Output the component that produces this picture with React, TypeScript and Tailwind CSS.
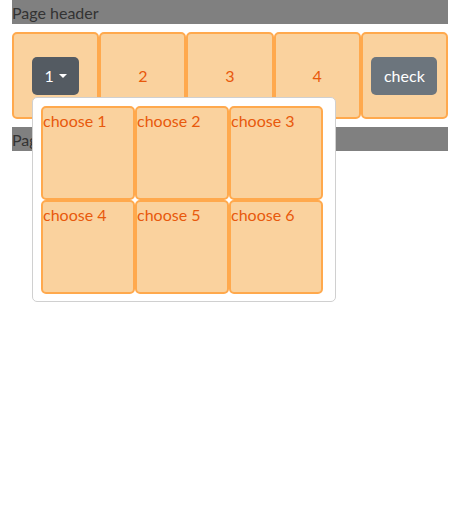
import React from "react";

const cell = "border-2 border-[#ffa94d] bg-[#fad29e] rounded-[5px] flex items-center justify-center text-[#e8590c]";

export default function App() {
  const choices = ["choose 1", "choose 2", "choose 3", "choose 4", "choose 5", "choose 6"];
  return (
    <div className="min-h-[524px] bg-white text-[16px] leading-6 text-[#212529]" style={{ fontFamily: "Lato, 'Noto Sans', sans-serif" }}>
      <div className="mx-3 h-6 bg-[#808080] pt-[1px] text-[#333]">Page header</div>
      <div className="relative mx-3 mt-2 grid h-[87px] grid-cols-5">
        <div className={cell}>
          <button className="flex h-[38px] w-[47px] items-center justify-center rounded-[5px] bg-[#545b62] text-white">
            1
            <span className="ml-[5px] inline-block h-0 w-0 border-x-[4px] border-t-[4px] border-x-transparent border-t-white" />
          </button>
        </div>
        <div className={cell}>2</div>
        <div className={cell}>3</div>
        <div className={cell}>4</div>
        <div className={cell}>
          <button className="h-[38px] w-[66px] rounded-[5px] bg-[#6c757d] text-white">check</button>
        </div>
        <div className="absolute left-5 top-[65px] z-10 w-[304px] rounded-[5px] border border-[#d0d0d0] bg-white pl-2 pt-2 pb-[7px]">
          <div className="grid grid-cols-[94px_94px_94px] grid-rows-[94px_94px]">
            {choices.map((c) => (
              <div key={c} className="rounded-[5px] border-2 border-[#ffa94d] bg-[#fad29e] pt-[1px] text-[#e8590c]">
                {c}
              </div>
            ))}
          </div>
        </div>
      </div>
      <div className="mx-3 mt-2 h-6 bg-[#808080] pt-[1px] text-[#333]">Page header</div>
    </div>
  );
}
